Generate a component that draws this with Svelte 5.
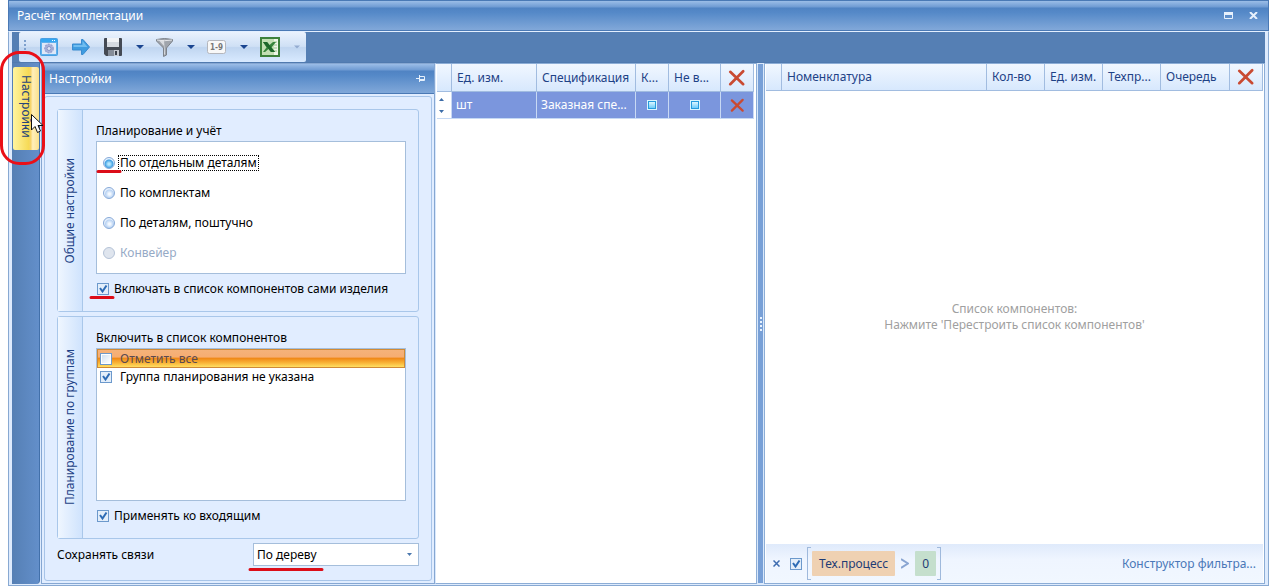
<script>
  let mode = $state('parts');
  let includeItems = $state(true);
  let applyIncoming = $state(true);
  let filterOn = $state(true);
  let link = $state('tree');
  const modes = [
    { id: 'parts', label: 'По отдельным деталям' },
    { id: 'sets', label: 'По комплектам' },
    { id: 'pieces', label: 'По деталям, поштучно' },
    { id: 'conveyor', label: 'Конвейер', disabled: true }
  ];
</script>

{#snippet cross(size)}
  <svg class="cross" width={size} height={size} viewBox="0 0 16 16" aria-hidden="true">
    <path d="M2 2.500L13.500 13.500M13.500 2L2 13.500" fill="none" stroke="#c94a32" stroke-width="2.400" stroke-linecap="round" />
  </svg>
{/snippet}

{#snippet arrow(dim)}
  <button class="drop" class:dim aria-label="Ещё">
    <svg width="8" height="4" viewBox="0 0 8 4"><path d="M0 0h8L4 4z" fill="currentColor" /></svg>
  </button>
{/snippet}

<div class="window">
  <header class="title">
    <h1>Расчёт комплектации</h1>
    <button class="cap" aria-label="Развернуть">
      <svg width="9" height="7" viewBox="0 0 9 7"><path d="M.5.5h8v6h-8z" fill="none" stroke="#e6f0fc" /><path d="M0 0h9v3H0z" fill="#e6f0fc" /></svg>
    </button>
    <button class="cap" aria-label="Закрыть">
      <svg width="9" height="7" viewBox="0 0 9 7"><path d="M1 0l7 7M8 0l-7 7" stroke="#e6f0fc" stroke-width="2" /></svg>
    </button>
  </header>

  <div class="frame">
    <div class="toolbar-row">
      <div class="toolbar">
        <svg class="grip" width="2" height="14" viewBox="0 0 2 14" aria-hidden="true"><path d="M0 0h2v2H0zM0 4h2v2H0zM0 8h2v2H0zM0 12h2v2H0z" fill="#7da0cd" /></svg>
        <button class="tool" aria-label="Параметры">
          <svg width="18" height="18" viewBox="0 0 18 18">
            <rect x=".5" y=".5" width="17" height="17" rx="1" fill="#5fb0ec" stroke="#4a9fe2" />
            <path d="M1 1h16v3H1z" fill="#35a7f2" /><path d="M12 2h1v1h-1zM14 2h1v1h-1z" fill="#fff" />
            <path d="M2 5h14v11H2z" fill="#dfe8f8" />
            <circle cx="9" cy="10.500" r="4.200" fill="#a9b2da" stroke="#98a2d0" stroke-width="1.400" stroke-dasharray="2 1" />
            <circle cx="9" cy="10.500" r="2" fill="#dde3f5" stroke="#8794c6" />
          </svg>
        </button>
        <button class="tool go" aria-label="Перестроить">
          <svg width="18" height="17" viewBox="0 0 18 17">
            <path d="M.5 5h9V.5h1.500l6.500 7.500-6.500 7.500H9.500V11h-9z" fill="#3f9ce0" stroke="#3a8bd0" stroke-linejoin="round" />
            <path d="M1.500 6h9V2l5 6h-14z" fill="#70bdf0" />
          </svg>
        </button>
        <button class="tool save" aria-label="Сохранить">
          <svg width="18" height="18" viewBox="0 0 18 18">
            <path d="M0 1q0-1 1-1h16q1 0 1 1v16q0 1-1 1H2l-2-2z" fill="#444a54" />
            <path d="M3 0h12v9H3z" fill="#d5dae1" /><path d="M3 0h12v4H3z" fill="#f1f3f6" />
            <path d="M4 12h11v6H4z" fill="#858d99" /><path d="M10 12h5v6h-5z" fill="#c5cad2" /><path d="M11 13h2v4h-2z" fill="#3b414b" />
          </svg>
        </button>
        {@render arrow(false)}
        <button class="tool filter" aria-label="Фильтр">
          <svg width="17" height="19" viewBox="0 0 17 19">
            <path d="M.5 1.500q8-2 16 0v1.500L10.500 10v7l-3 1.500v-8.500L.5 3z" fill="#a0a5ac" stroke="#7c828a" />
            <path d="M8 2q-3 0-5 .5L8 8v9l1-1z" fill="#d9dce0" /><path d="M1 2q7 1.500 15 0" fill="none" stroke="#e5e7ea" />
          </svg>
        </button>
        {@render arrow(false)}
        <button class="tool num" aria-label="Нумерация">
          <svg width="19" height="14" viewBox="0 0 19 14">
            <rect x=".5" y=".5" width="18" height="13" rx="2" fill="#f8f8f8" stroke="#b4b6bc" />
            <text x="9.500" y="10" text-anchor="middle" font-family="DejaVu Sans Condensed" font-weight="bold" font-size="8" fill="#777">1-9</text>
          </svg>
        </button>
        {@render arrow(false)}
        <button class="tool xls" aria-label="Экспорт в Excel">
          <svg width="20" height="20" viewBox="0 0 20 20">
            <path d="M0 0h20v20H0z" fill="#3d813b" /><path d="M2 2h16v16H2z" fill="#c3dfb4" /><path d="M14 2h4v16h-4z" fill="#eef6e8" />
            <path d="M14 5h3M14 8h3M14 11h3M14 14h3" stroke="#9ac28c" />
            <path d="M3 5h4l2.500 3L13 5h3l-4.500 5.500L15 15h-4l-2.500-3L5 15H3l3.500-4.500z" fill="#37853b" /><path d="M3 5h4l8 10h-4z" fill="#1d672b" />
          </svg>
        </button>
        {@render arrow(true)}
      </div>
    </div>

    <div class="work">
      <aside class="rail">
        <button class="tab">Настройки</button>
      </aside>

      <section class="panel">
        <header class="panel-title">
          <h2>Настройки</h2>
          <button aria-label="Закрепить">
            <svg width="9" height="7" viewBox="0 0 9 7"><path d="M0 3.500h3M3.500 0v7M4 1.500h4.500v4H4M4 4.500h5" fill="none" stroke="#e6f0fc" /></svg>
          </button>
        </header>
        <div class="panel-body">
          <div class="settings">
            <section class="group">
              <h3><span>Общие настройки</span></h3>
              <div class="fields">
                <p id="mode-label">Планирование и учёт</p>
                <div class="box radios" role="radiogroup" aria-labelledby="mode-label">
                  {#each modes as m}
                    <label class:off={m.disabled}>
                      <input type="radio" name="mode" value={m.id} bind:group={mode} disabled={m.disabled} />
                      <span class:focus={mode === m.id}>{m.label}</span>
                    </label>
                  {/each}
                </div>
                <label class="check"><input type="checkbox" bind:checked={includeItems} />Включать в список компонентов сами изделия</label>
              </div>
            </section>
            <section class="group">
              <h3><span>Планирование по группам</span></h3>
              <div class="fields">
                <p>Включить в список компонентов</p>
                <div class="box list">
                  <label class="sel"><input type="checkbox" />Отметить все</label>
                  <label><input type="checkbox" checked />Группа планирования не указана</label>
                </div>
                <label class="check"><input type="checkbox" bind:checked={applyIncoming} />Применять ко входящим</label>
              </div>
            </section>
            <div class="links">
              <label for="links">Сохранять связи</label>
              <div class="combo">
                <select id="links" bind:value={link}><option value="tree">По дереву</option></select>
                <svg width="5" height="3" viewBox="0 0 5 3" aria-hidden="true"><path d="M0 0h5L2.500 3z" fill="#4b78ae" /></svg>
              </div>
            </div>
          </div>
        </div>
      </section>

      <section class="items">
        <table>
          <colgroup><col class="w15" /><col class="w85" /><col /><col class="w33" /><col class="w52" /><col class="w33" /></colgroup>
          <thead>
            <tr><th></th><th>Ед. изм.</th><th>Спецификация</th><th>К...</th><th>Не в...</th><th class="mid">{@render cross(18)}</th></tr>
          </thead>
          <tbody>
            <tr>
              <td class="mark"><svg width="5" height="15" viewBox="0 0 5 15" aria-hidden="true"><path d="M0 3h5L2.500 0zM0 12h5l-2.500 3z" fill="#3d6da8" /></svg></td>
              <td>шт</td><td>Заказная спе...</td>
              <td class="mid"><input class="tri" type="checkbox" aria-label="К" /></td>
              <td class="mid"><input class="tri" type="checkbox" aria-label="Не в" /></td>
              <td class="mid">{@render cross(15)}</td>
            </tr>
          </tbody>
        </table>
      </section>

      <div class="splitter"><i></i><i></i><i></i><i></i></div>

      <section class="components">
        <table>
          <colgroup><col class="w16" /><col /><col class="w58" /><col class="w58" /><col class="w58" /><col class="w69" /><col class="w33" /></colgroup>
          <thead>
            <tr><th></th><th>Номенклатура</th><th>Кол-во</th><th>Ед. изм.</th><th>Техпр...</th><th>Очередь</th><th class="mid">{@render cross(18)}</th></tr>
          </thead>
        </table>
        <p class="empty">Список компонентов:<br />Нажмите 'Перестроить список компонентов'</p>
        <footer>
          <button class="clear" aria-label="Очистить фильтр"><svg width="7" height="7" viewBox="0 0 7 7"><path d="M.5.5l6 6M6.500.5l-6 6" stroke="#3d6cb0" stroke-width="1.500" /></svg></button>
          <input type="checkbox" bind:checked={filterOn} aria-label="Фильтр включён" />
          <div class="expr">
            <span class="field">Тех.процесс</span>
            <svg width="8" height="11" viewBox="0 0 8 11" role="img" aria-label="больше"><path d="M0 1l7 4.500L0 10" fill="none" stroke="#89a5d2" stroke-width="2" /></svg>
            <span class="value">0</span>
          </div>
          <a href="#filter">Конструктор фильтра...</a>
        </footer>
      </section>
    </div>
  </div>

  <svg class="ink" width="330" height="586" viewBox="0 0 330 586" aria-hidden="true">
    <rect x="1.500" y="52.500" width="42" height="111" rx="18" fill="none" stroke="#ea0f17" stroke-width="3" />
    <path d="M98 171.500h22M91 297.500h22M250 569.500h72" stroke="#dc0d18" stroke-width="3" stroke-linecap="round" />
    <path d="M31.500 114.500v15.500l3.500-3.500 2.500 6 3-1.500-2.500-5.500h5z" fill="#fff" stroke="#111" />
  </svg>
</div>

<style>
  :global(body) { background: #fff; }
  .window, .window * { box-sizing: border-box; }
  .window {
    position: relative;
    display: flex;
    flex-direction: column;
    min-height: 100vh;
    padding-left: 8px;
    font: 12px/16px "Noto Sans", "DejaVu Sans Condensed", sans-serif;
    color: #000;
  }
  h1, h2, h3, p { margin: 0; font: inherit; }
  button { padding: 0; border: 0; background: none; color: inherit; font: inherit; line-height: 0; flex: none; }
  svg { display: block; }
  .ink { position: absolute; left: 0; top: 0; pointer-events: none; }

  .title, .panel-title {
    display: flex;
    align-items: center;
    color: #fff;
    border: 1px solid #4a79b5;
    background: linear-gradient(#9bbde7 0, #6f9bd3 6px, #5083c3 7px, #5589c8 40%, #81a8d9 100%);
  }
  .title { height: 31px; gap: 16px; padding: 0 10px 0 8px; }
  .title h1, .panel-title h2 { flex: 1; }

  .frame {
    flex: 1;
    display: flex;
    flex-direction: column;
    border: 1px solid #88a9d2;
    border-top-color: #e3efff;
    padding: 0 3px 1px;
    background: #deebfd;
  }
  .toolbar-row { height: 31px; background: #557fb4; padding-left: 7px; border-bottom: 1px solid #507aaf; }
  .toolbar {
    display: flex;
    align-items: center;
    width: 287px;
    height: 30px;
    padding: 0 6px 0 5px;
    border-radius: 2px;
    background: linear-gradient(#eaf2fd, #cfe0f5 48%, #c0d5f0 52%, #d8eaff);
  }
  .grip { margin-right: 14px; }
  .go { margin-left: 14px; }
  .save { margin-left: 14px; }
  .drop { width: 8px; margin-left: 14px; color: #1a4590; }
  .drop.dim { width: 6px; margin-left: 14px; color: #93abd0; }
  .drop.dim svg { width: 6px; }
  .filter { margin-left: 12px; }
  .num { margin-left: 12px; }
  .xls { margin-left: 12px; }

  .work { flex: 1; display: flex; min-height: 0; }
  .rail {
    width: 28px;
    padding: 4px 1px;
    background: linear-gradient(90deg, #557fb4, #638fca);
    border-right: 1px solid #4270aa;
    border-radius: 0 0 4px 0;
  }
  .tab {
    display: flex;
    align-items: center;
    width: 26px;
    height: 83px;
    padding-top: 8px;
    writing-mode: vertical-rl;
    line-height: 26px;
    color: #24437c;
    border-radius: 2px;
    background: linear-gradient(90deg, #fff4a0, #f6da56 60%, #f7d46b 68%, #ffefbb 76%, #fbe18b);
  }

  .panel {
    display: flex;
    flex-direction: column;
    width: 394px;
    margin-left: 1px;
    border: 1px solid #86a7d2;
  }
  .panel-title { height: 30px; padding: 0 9px 0 7px; border-width: 0 0 1px; }
  .panel-body { flex: 1; display: flex; padding: 2px; background: #e1edff; }
  .settings {
    flex: 1;
    display: flex;
    flex-direction: column;
    gap: 4px;
    padding: 12px;
    border: 1px solid #a7c4e8;
    border-radius: 3px;
    background: #e1edff;
  }
  .group { display: flex; border: 1px solid #a9c7ea; border-radius: 3px; }
  .group h3 {
    display: flex;
    align-items: center;
    justify-content: center;
    width: 25px;
    border-right: 1px solid #a9c7ea;
    background: linear-gradient(90deg, #eff6ff, #cfe3fd);
    color: #1e4286;
  }
  .group h3 span { writing-mode: vertical-rl; transform: rotate(180deg); white-space: nowrap; }
  .fields { flex: 1; padding: 12px 12px 14px 13px; }
  .fields p { height: 19px; line-height: 18px; }
  .box { border: 1px solid #a5bedb; background: #fff; }
  .radios { display: flex; flex-direction: column; gap: 14px; padding: 13px 6px 11px; height: 133px; }
  .list { height: 153px; }
  label { display: flex; align-items: center; white-space: nowrap; }
  .radios span { margin-left: 3px; padding: 0 1px; border: 1px solid transparent; line-height: 14px; }
  .radios .focus { border: 1px dotted #000; }
  .off { color: #96aac6; }
  .list label { height: 18px; padding-left: 3px; gap: 8px; }
  .list .sel {
    height: 19px;
    padding-left: 2px;
    color: #5a4a50;
    border: 1px solid #d08a35;
    background: linear-gradient(#f5b27a, #f6ad72 40%, #f08a19 50%, #f9b336 75%, #ffe063);
  }
  .check { margin-top: 7px; padding-left: 1px; gap: 5px; }

  input { appearance: none; flex: none; margin: 0; width: 12px; height: 12px; }
  input[type="checkbox"] {
    border: 1px solid #6c99cc;
    background: linear-gradient(135deg, #cfe0f3, #fff) center / 8px 8px no-repeat #fff;
  }
  input[type="checkbox"]:checked {
    background: url("data:image/svg+xml,%3Csvg xmlns='http://www.w3.org/2000/svg' viewBox='0 0 10 10'%3E%3Cpath d='M0 0h10v10H0z' fill='%23e3eefa'/%3E%3Cpath d='M2 4l2.500 3.500L8.500 1.500' fill='none' stroke='%232d6bb5' stroke-width='2'/%3E%3C/svg%3E") center / 10px 10px;
  }
  input[type="radio"] {
    border: 1px solid #86a9d8;
    border-radius: 50%;
    background: radial-gradient(circle at 55% 60%, #f4f9ff 0 1px, #b9d3f3 4px, #e5effc 5px);
  }
  input[type="radio"]:checked { background: radial-gradient(circle at 50% 60%, #b5e8ff 0 1px, #3f9fe2 4px, #e5f2ff 5px); }
  input[type="radio"]:disabled { border-color: #b5c3d7; background: #dfe5ee; }
  .mid input.tri {
    display: block;
    margin: 0 auto;
    width: 10px;
    height: 10px;
    border: 1px solid #d9f5ff;
    background: linear-gradient(#ddf6ff, #6ecdfb) center / 6px 6px no-repeat #279bdd;
  }

  .links { display: flex; align-items: center; }
  .links label { width: 196px; }
  .combo { position: relative; flex: 1; }
  .combo svg { position: absolute; right: 7px; top: 10px; pointer-events: none; }
  select {
    appearance: none;
    display: block;
    width: 100%;
    height: 23px;
    padding: 0 3px;
    border: 1px solid #a5bedb;
    border-radius: 0;
    background: #fff;
    color: #000;
    font: inherit;
  }

  .items { width: 322px; padding: 0 2px 0 1px; background: #fff; border: 1px solid #8cadd6; border-left-color: #d9e8fb; }
  table { width: 100%; border-collapse: separate; border-spacing: 0; table-layout: fixed; }
  th, td { padding: 0 0 0 5px; font-weight: normal; text-align: left; white-space: nowrap; overflow: hidden; border-right: 1px solid #a1bce0; }
  th { height: 27px; color: #1e4286; border-bottom: 1px solid #a1bce0; background: linear-gradient(#f1f7ff, #d7e8fd); }
  td { height: 27px; padding-left: 4px; color: #fff; background: #7b96dd; border-right-color: #c8d9f4; border-bottom: 1px solid #c5d9f4; }
  td.mark { padding: 0 4px 0 2px; background: #fff; }
  th.mid, td.mid { padding: 0; text-align: center; }
  .items th { height: 28px; }
  .cross { margin: 0 auto; }
  .w15 { width: 15px; }
  .w16 { width: 16px; }
  .w33 { width: 33px; }
  .w52 { width: 52px; }
  .w58 { width: 58px; }
  .w69 { width: 69px; }
  .w85 { width: 85px; }

  .splitter {
    display: flex;
    flex-direction: column;
    justify-content: center;
    align-items: center;
    gap: 2px;
    width: 7px;
    border: 1px solid #d9e8fb;
    background: #78a0d7;
  }
  .splitter i { width: 2px; height: 2px; background: #e9f3ff; }

  .components { flex: 1; display: flex; flex-direction: column; min-width: 0; border: 1px solid #8cadd6; padding: 0 1px; background: #fff; }
  .empty { flex: 1; display: flex; align-items: center; justify-content: center; text-align: center; color: #a0a0a0; padding-bottom: 2px; }
  footer {
    display: flex;
    align-items: center;
    height: 39px;
    padding: 0 7px 0 7px;
    background: linear-gradient(#dfeafb, #eff5ff 40%, #f1f7ff);
  }
  footer input { margin: 0 5px 0 10px; }
  .expr {
    display: flex;
    align-items: center;
    gap: 6px;
    height: 33px;
    padding: 0 4px;
    color: #1e3c75;
    border: 1px solid #9fb9dc;
    border-width: 0 1px;
    background:
      linear-gradient(#9fb9dc, #9fb9dc) 0 0 / 3px 1px no-repeat,
      linear-gradient(#9fb9dc, #9fb9dc) 0 100% / 3px 1px no-repeat,
      linear-gradient(#9fb9dc, #9fb9dc) 100% 0 / 3px 1px no-repeat,
      linear-gradient(#9fb9dc, #9fb9dc) 100% 100% / 3px 1px no-repeat;
  }
  .field, .value { line-height: 25px; padding: 0 7px; border-radius: 1px; }
  .field { background: #efd1b2; }
  .value { background: #c5dfcd; }
  footer a { margin-left: auto; color: #4a78b8; text-decoration: none; }
</style>
